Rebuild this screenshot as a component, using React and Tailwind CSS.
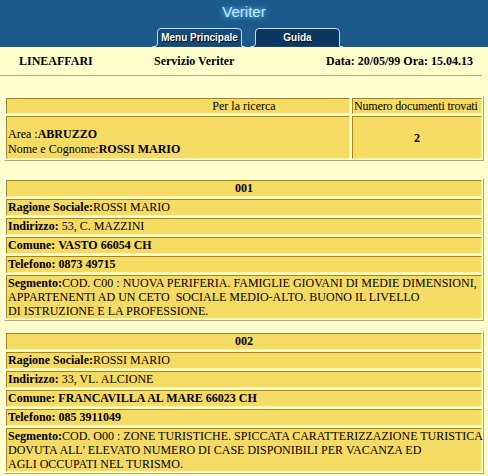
import React from 'react';

const serif = { fontFamily: '"Liberation Serif", "Times New Roman", serif' };

// cella con bordo "inset" come le vecchie tabelle HTML
const Cell = ({ className = '', children }) => (
  <div
    className={`bg-[#f5db63] border border-t-[#a48a12] border-l-[#a48a12] border-b-[#fdf1a8] border-r-[#fdf1a8] ${className}`}
  >
    {children}
  </div>
);

// tabella con bordo "outset"
const Table = ({ className = '', children }) => (
  <div
    className={`mx-[4px] border border-t-[#fffff4] border-l-[#fffff4] border-b-[#a9a587] border-r-[#a9a587] p-[1px] flex flex-col gap-[2px] ${className}`}
  >
    {children}
  </div>
);

const Tab = ({ label, dark }) => (
  <div className="relative w-[94px] h-[19px]">
    <svg width="94" height="19" viewBox="0 0 94 19" className="absolute inset-0">
      <path
        d="M0.5 18.5 H3 Q5.5 18.5 5.5 15 V4 Q5.5 0.5 9 0.5 H86 Q89.5 0.5 89.5 4 V18.5"
        fill={dark ? '#0b3863' : '#14497a'}
        stroke="#c4dcf2"
        strokeWidth="1"
      />
      <path d="M90 18.5 H93" stroke="#c4dcf2" strokeWidth="1" />
    </svg>
    <div
      className="absolute left-[6px] right-[5px] top-[3px] text-center text-[10px] font-bold leading-[13px] text-white [text-shadow:1px_1px_0_#000]"
      style={{ fontFamily: '"Liberation Sans", Arial, sans-serif' }}
    >
      {label}
    </div>
  </div>
);

const Scheda = ({ className = '', num, ragione, indirizzo, comune, telefono, segmento }) => (
  <Table className={className}>
    <Cell className="h-[17px] text-center text-[12px] font-bold leading-[15px]">{num}</Cell>
    <Cell className="h-[17px] pl-[1px] text-[12px] leading-[15px]">
      <b>Ragione Sociale:</b>
      {ragione}
    </Cell>
    <Cell className="h-[17px] pl-[1px] text-[12px] leading-[15px]">
      <b>Indirizzo:</b> {indirizzo}
    </Cell>
    <Cell className="h-[17px] pl-[1px] text-[12px] font-bold leading-[15px]">Comune: {comune}</Cell>
    <Cell className="h-[17px] pl-[1px] text-[12px] font-bold leading-[15px]">Telefono: {telefono}</Cell>
    <Cell className="pl-[1px] text-[12px] leading-[14px] whitespace-pre">
      <div>
        <b>Segmento:</b>
        <span>{segmento[0]}</span>
      </div>
      <div>{segmento[1]}</div>
      <div>{segmento[2]}</div>
    </Cell>
  </Table>
);

export default function App() {
  return (
    <div className="w-[488px] h-[476px] bg-[#ffffcc] text-black overflow-hidden" style={serif}>
      {/* barra superiore */}
      <div className="h-[47px] bg-[#1c5a8b] flex flex-col">
        <div
          className="h-[28px] pt-[3px] text-center text-[15px] leading-[18px] text-[#c8ecff] [text-shadow:0_0_4px_#5fb4ff,0_0_8px_#3f9cf0]"
          style={{ fontFamily: '"Liberation Sans", Arial, sans-serif' }}
        >
          Veriter
        </div>
        <div className="flex pl-[152px] gap-[4px]">
          <Tab label="Menu Principale" />
          <Tab label="Guida" dark />
        </div>
      </div>

      {/* intestazione */}
      <div className="h-[29px] flex items-center text-[12px] font-bold leading-[15px] border-b border-[#b5b18d] w-[482px] pt-[1px]">
        <div className="w-[154px] pl-[19px]">LINEAFFARI</div>
        <div className="w-[172px]">Servizio Veriter</div>
        <div>Data: 20/05/99 Ora: 15.04.13</div>
      </div>

      {/* ricerca */}
      <Table className="mt-[20px]">
        <div className="grid grid-cols-[344px_1fr] gap-[2px]">
          <Cell className="h-[16px] pl-[132px] text-center text-[12px] leading-[14px]">Per la ricerca</Cell>
          <Cell className="h-[16px] pl-[1px] text-[12px] leading-[14px] tracking-[-0.15px] whitespace-nowrap">
            Numero documenti trovati
          </Cell>
        </div>
        <div className="grid grid-cols-[344px_1fr] gap-[2px]">
          <Cell className="h-[43px] pl-[1px] pt-[10px] text-[12px] leading-[15px]">
            <div>
              Area :<b>ABRUZZO</b>
            </div>
            <div>
              Nome e Cognome:<b>ROSSI MARIO</b>
            </div>
          </Cell>
          <Cell className="h-[43px] flex items-center justify-center text-[12px] font-bold">2</Cell>
        </div>
      </Table>

      <Scheda
        className="mt-[17px]"
        num="001"
        ragione="ROSSI MARIO"
        indirizzo="53, C. MAZZINI"
        comune="VASTO 66054 CH"
        telefono="0873 49715"
        segmento={[
          'COD. C00 : NUOVA PERIFERIA. FAMIGLIE GIOVANI DI MEDIE DIMENSIONI,',
          'APPARTENENTI AD UN CETO  SOCIALE MEDIO-ALTO. BUONO IL LIVELLO',
          'DI ISTRUZIONE E LA PROFESSIONE.',
        ]}
      />

      <Scheda
        className="mt-[10px]"
        num="002"
        ragione="ROSSI MARIO"
        indirizzo="33, VL. ALCIONE"
        comune="FRANCAVILLA AL MARE 66023 CH"
        telefono="085 3911049"
        segmento={[
          'COD. O00 : ZONE TURISTICHE. SPICCATA CARATTERIZZAZIONE TURISTICA',
          "DOVUTA ALL' ELEVATO NUMERO DI CASE DISPONIBILI PER VACANZA ED",
          'AGLI OCCUPATI NEL TURISMO.',
        ]}
      />
    </div>
  );
}
